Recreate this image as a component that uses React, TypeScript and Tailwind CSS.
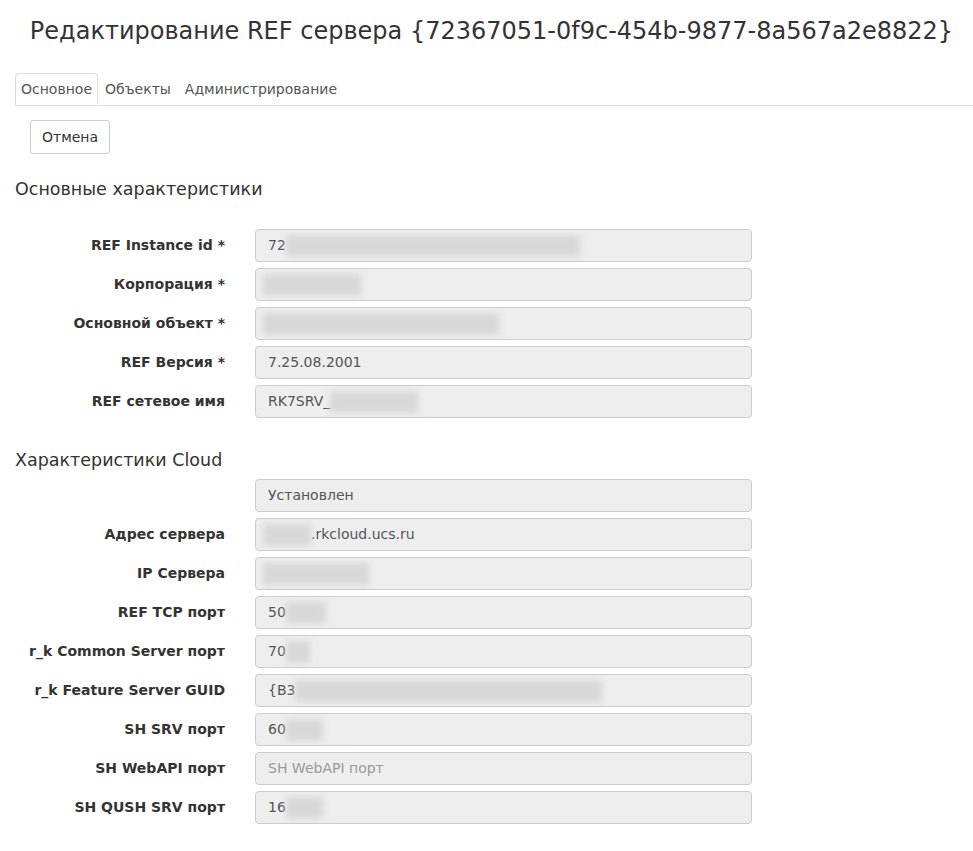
import React from 'react';

interface Field {
  label: string;
  value?: string;
  blur?: string; // width class of the hidden part
  blurOnly?: boolean;
  placeholder?: string;
}

const mainFields: Field[] = [
  { label: 'REF Instance id *', value: '72', blur: 'w-[294px]' },
  { label: 'Корпорация *', blur: 'w-[98px]', blurOnly: true },
  { label: 'Основной объект *', blur: 'w-[236px]', blurOnly: true },
  { label: 'REF Версия *', value: '7.25.08.2001' },
  { label: 'REF сетевое имя', value: 'RK7SRV_', blur: 'w-[88px]' },
];

const cloudFields: Field[] = [
  { label: '', value: 'Установлен' },
  { label: 'Адрес сервера', value: '.rkcloud.ucs.ru', blur: 'w-[48px]', blurOnly: true },
  { label: 'IP Сервера', blur: 'w-[106px]', blurOnly: true },
  { label: 'REF TCP порт', value: '50', blur: 'w-[40px]' },
  { label: 'r_k Common Server порт', value: '70', blur: 'w-[24px]' },
  { label: 'r_k Feature Server GUID', value: '{B3', blur: 'w-[307px]' },
  { label: 'SH SRV порт', value: '60', blur: 'w-[37px]' },
  { label: 'SH WebAPI порт', placeholder: 'SH WebAPI порт' },
  { label: 'SH QUSH SRV порт', value: '16', blur: 'w-[37px]' },
];

function Hidden({ width }: { width: string }) {
  return <span className={`inline-block h-[22px] ${width} bg-[#d8d8d8] blur-[3px] align-middle`} />;
}

function Row({ f }: { f: Field }) {
  return (
    <div className="flex items-center mb-[6px]">
      <div className="w-[225px] text-right font-bold text-[14px] text-[#333]">{f.label}</div>
      <div className="ml-[30px] w-[497px] h-[33px] flex items-center bg-[#eeeeee] border border-[#cccccc] rounded-[4px] px-[12px] text-[14px] text-[#555] overflow-hidden whitespace-nowrap">
        {f.placeholder && <span className="text-[#999]">{f.placeholder}</span>}
        {f.blurOnly ? (
          <>
            <span className="-ml-[5px]"><Hidden width={f.blur!} /></span>
            {f.value && <span>{f.value}</span>}
          </>
        ) : (
          <>
            {f.value && <span>{f.value}</span>}
            {f.blur && <Hidden width={f.blur} />}
          </>
        )}
      </div>
    </div>
  );
}

export default function App() {
  return (
    <div className="min-h-[851px] bg-white text-[#333] font-['DejaVu_Sans',Verdana,sans-serif]">
      <h1 className="pt-[15px] pl-[10px] text-center text-[24px] leading-[32px] text-[#333]">
        Редактирование REF сервера {'{72367051-0f9c-454b-9877-8a567a2e8822}'}
      </h1>

      {/* Tabs */}
      <div className="mt-[26px] ml-[15px] flex border-b border-[#dddddd] text-[14px] text-[#555]">
        <div className="-mb-px px-[5px] h-[32px] flex items-center bg-white border border-[#dddddd] border-b-white rounded-t-[4px]">Основное</div>
        <div className="px-[7px] h-[32px] flex items-center">Объекты</div>
        <div className="px-[7px] h-[32px] flex items-center">Администрирование</div>
      </div>

      <div className="px-[15px]">
        <button className="mt-[14px] ml-[15px] h-[34px] px-[11px] border border-[#cccccc] rounded-[3px] bg-white text-[14px] text-[#333]">
          Отмена
        </button>

        <h3 className="mt-[23px] mb-[28px] text-[17.5px] leading-[24px]">Основные характеристики</h3>
      </div>

      {mainFields.map((f, i) => <Row key={i} f={f} />)}

      <h3 className="mt-[30px] mb-[7px] px-[15px] text-[17.5px] leading-[24px]">Характеристики Cloud</h3>

      {cloudFields.map((f, i) => <Row key={i} f={f} />)}
    </div>
  );
}
